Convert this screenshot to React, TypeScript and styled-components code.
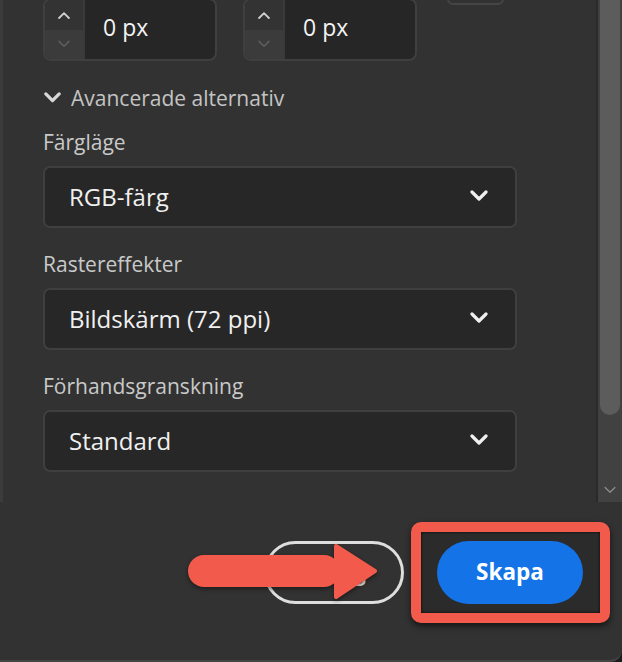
import React from 'react';
import styled, { createGlobalStyle } from 'styled-components';

const GlobalStyle = createGlobalStyle`
  html, body {
    margin: 0;
    padding: 0;
    background: #1c1c1c;
  }
  body {
    font-family: "Open Sans", "Noto Sans", sans-serif;
  }
`;

const Panel = styled.div`
  width: 622px;
  height: 662px;
  background: #323232;
  border-bottom-right-radius: 12px;
  border-bottom: 2px solid #444;
  box-sizing: border-box;
  overflow: hidden;
  display: flex;
  flex-direction: column;
`;

const Viewport = styled.div`
  height: 502px;
  display: flex;
  border-left: 3px solid #3c3c3c;
`;

const ScrollContent = styled.div`
  flex: 1;
  overflow: hidden;
  padding-left: 40px;
`;

const Inner = styled.div<{ offset: number }>`
  margin-top: ${p => -p.offset}px;
  display: flex;
  flex-direction: column;
`;

const StepperGrid = styled.div`
  display: grid;
  grid-template-columns: 174px 174px 61px;
  grid-template-rows: 63px 63px;
  column-gap: 26px;
  row-gap: 12px;
`;

const Stepper = styled.div`
  grid-row: 2;
  display: flex;
  height: 63px;
  box-sizing: border-box;
  border: 2px solid #3f3f3f;
  border-radius: 8px;
  background: #262626;
  overflow: hidden;
`;

const StepButtons = styled.div`
  width: 38px;
  display: flex;
  flex-direction: column;
  border-right: 2px solid #3a3a3a;
`;

const StepHalf = styled.div<{ dim?: boolean }>`
  flex: 1;
  display: flex;
  align-items: center;
  justify-content: center;
  background: ${p => (p.dim ? '#3b3b3b' : '#333333')};
  color: ${p => (p.dim ? '#5e5e5e' : '#cfcfcf')};
`;

const StepValue = styled.div`
  flex: 1;
  display: flex;
  align-items: center;
  padding: 0 0 5px 18px;
  color: #f2f2f2;
  font-size: 23px;
`;

const LinkToggle = styled.div`
  grid-column: 3;
  grid-row: 1 / span 2;
  align-self: center;
  height: 26px;
  box-sizing: border-box;
  border: 2px solid #454545;
  border-radius: 6px;
  margin-left: 4px;
`;

const Disclosure = styled.div`
  display: flex;
  align-items: center;
  gap: 9px;
  margin-top: 25px;
  height: 24px;
  color: #c4c4c4;
  font-size: 21px;
`;

const Field = styled.div<{ first?: boolean }>`
  display: flex;
  flex-direction: column;
  gap: 12px;
  margin-top: ${p => (p.first ? 20 : 24)}px;
`;

const Label = styled.div`
  height: 24px;
  line-height: 24px;
  color: #c9c9c9;
  font-size: 21px;
`;

const Select = styled.div`
  width: 474px;
  height: 62px;
  box-sizing: border-box;
  display: flex;
  align-items: center;
  justify-content: space-between;
  padding: 0 26px 2px 24px;
  border: 2px solid #3f3f3f;
  border-radius: 7px;
  background: #272727;
  color: #f0f0f0;
  font-size: 24px;
`;

const Scrollbar = styled.div`
  width: 24px;
  background: #414141;
  border-left: 2px solid #2a2a2a;
  display: flex;
  flex-direction: column;
  justify-content: space-between;
  align-items: center;
`;

const Thumb = styled.div`
  width: 20px;
  height: 415px;
  background: #5c5c5c;
  border-radius: 0 0 10px 10px;
`;

const ScrollArrow = styled.div`
  height: 24px;
  display: flex;
  align-items: center;
  color: #8a8a8a;
`;

const Footer = styled.div`
  position: relative;
  flex: 1;
  display: flex;
  justify-content: flex-end;
  align-items: flex-start;
  padding: 20px 12px 0 0;
`;

const ButtonRow = styled.div`
  display: flex;
  align-items: center;
  gap: 7px;
`;

const PillButton = styled.div<{ primary?: boolean }>`
  height: 63px;
  box-sizing: border-box;
  border-radius: 32px;
  display: flex;
  align-items: center;
  justify-content: center;
  font-size: 22.5px;
  font-weight: 700;
  padding-bottom: 2px;
  ${p =>
    p.primary
      ? `
    width: 146px;
    background: #1473e6;
    color: #ffffff;
  `
      : `
    width: 140px;
    border: 3px solid #dedede;
    color: #ececec;
  `}
`;

const Highlight = styled.div`
  border: 10px solid #f25a4b;
  border-radius: 10px;
  padding: 9px 17px 9px 16px;
  background: #2b2b2b;
  box-shadow: 0 3px 6px rgba(0, 0, 0, 0.6), inset 0 0 3px rgba(0, 0, 0, 0.9);
`;

const ArrowMark = styled.svg`
  position: absolute;
  left: 186px;
  top: 40px;
  filter: drop-shadow(0 2px 2px rgba(0, 0, 0, 0.45));
`;

const Chevron = ({ size = 18, down = true, stroke = 3 }: { size?: number; down?: boolean; stroke?: number }) => (
  <svg width={size} height={size * 0.6} viewBox="0 0 20 12" fill="none">
    <path
      d={down ? 'M3 2 L10 9 L17 2' : 'M3 10 L10 3 L17 10'}
      stroke="currentColor"
      strokeWidth={stroke}
      strokeLinecap="round"
      strokeLinejoin="round"
    />
  </svg>
);

const NumberStepper = ({ value }: { value: string }) => (
  <Stepper>
    <StepButtons>
      <StepHalf>
        <Chevron size={14} down={false} stroke={2.6} />
      </StepHalf>
      <StepHalf dim>
        <Chevron size={14} stroke={2.2} />
      </StepHalf>
    </StepButtons>
    <StepValue>{value}</StepValue>
  </Stepper>
);

const fields = [
  { label: 'Färgläge', value: 'RGB-färg' },
  { label: 'Rastereffekter', value: 'Bildskärm (72 ppi)' },
  { label: 'Förhandsgranskning', value: 'Standard' },
];

const App: React.FC = () => {
  return (
    <>
      <GlobalStyle />
      <Panel>
        <Viewport>
          <ScrollContent>
            <Inner offset={77}>
              <StepperGrid>
                <LinkToggle />
                <NumberStepper value="0 px" />
                <NumberStepper value="0 px" />
              </StepperGrid>
              <Disclosure>
                <span style={{ color: '#d8d8d8', display: 'flex' }}>
                  <Chevron size={19} stroke={3.4} />
                </span>
                Avancerade alternativ
              </Disclosure>
              {fields.map((f, i) => (
                <Field key={f.label} first={i === 0}>
                  <Label>{f.label}</Label>
                  <Select>
                    {f.value}
                    <Chevron size={20} stroke={3.2} />
                  </Select>
                </Field>
              ))}
            </Inner>
          </ScrollContent>
          <Scrollbar>
            <Thumb />
            <ScrollArrow>
              <Chevron size={14} stroke={2} />
            </ScrollArrow>
          </Scrollbar>
        </Viewport>
        <Footer>
          <ButtonRow>
            <PillButton>Stäng</PillButton>
            <Highlight>
              <PillButton primary>Skapa</PillButton>
            </Highlight>
          </ButtonRow>
          <ArrowMark width="196" height="60" viewBox="0 0 196 60">
            <rect x="2" y="13" width="152" height="32" rx="16" fill="#f25a4b" />
            <path
              d="M150 4 L189 29 L150 55 Z"
              fill="#f25a4b"
              stroke="#f25a4b"
              strokeWidth="4"
              strokeLinejoin="round"
            />
          </ArrowMark>
        </Footer>
      </Panel>
    </>
  );
};

export default App;
